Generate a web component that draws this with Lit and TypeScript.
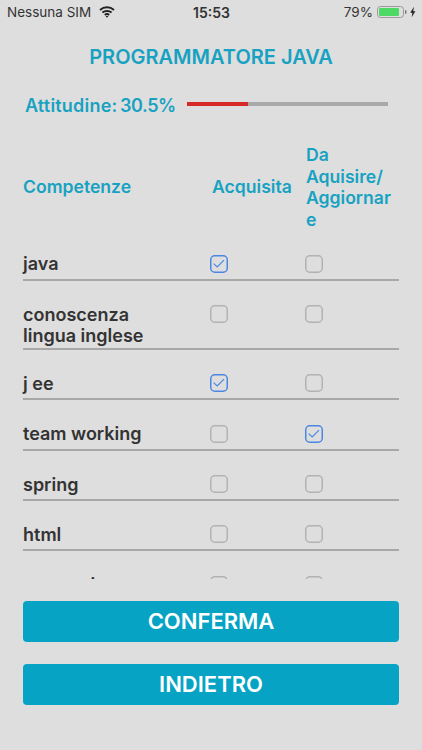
import { LitElement, html, css, svg } from "lit";
import { customElement } from "lit/decorators.js";

type Row = { name: string[]; a: boolean; b: boolean };
const rows: Row[] = [
  { name: ["java"], a: true, b: false },
  { name: ["conoscenza", "lingua inglese"], a: false, b: false },
  { name: ["j ee"], a: true, b: false },
  { name: ["team working"], a: false, b: true },
  { name: ["spring"], a: false, b: false },
  { name: ["html"], a: false, b: false },
  { name: ["responsive"], a: false, b: false },
];

@customElement("app-root")
export class AppRoot extends LitElement {
  static styles = css`
    :host {
      display: block;
      width: 422px;
      height: 750px;
      overflow: hidden;
      background: #dedede;
      font-family: Inter, "Liberation Sans", sans-serif;
    }
    .page { display: flex; flex-direction: column; height: 750px; }
    .status {
      height: 24px;
      flex: none;
      display: grid;
      grid-template-columns: 1fr auto 1fr;
      align-items: center;
      padding: 0 6px 0 7px;
      font-size: 13.5px;
      color: #333;
    }
    .status .left { display: flex; align-items: center; gap: 8px; }
    .status .time { font-weight: 600; font-size: 14px; }
    .status .right { display: flex; align-items: center; justify-content: flex-end; gap: 4px; }
    .title {
      flex: none;
      margin: 21px 0 0;
      height: 24px;
      line-height: 24px;
      text-align: center;
      font-size: 20px;
      font-weight: 600;
      color: #17a2c2;
    }
    .att {
      flex: none;
      margin-top: 25px;
      padding-left: 25px;
      display: flex;
      align-items: flex-start;
      height: 24px;
      color: #17a2c2;
      font-size: 18px;
      font-weight: 600;
      line-height: 24px;
      white-space: nowrap;
      word-spacing: -2px;
    }
    .att .lab { width: 162px; }
    .att .k { letter-spacing: 0.2px; }
    .att .v { letter-spacing: -0.4px; }
    .bar { width: 201px; height: 4px; margin-top: 8px; background: #a9a9a9; display: flex; }
    .bar i { display: block; height: 100%; background: #d62a26; }
    .scroll {
      flex: none;
      height: 462px;
      margin-top: -1px;
      padding: 0 23px;
      overflow: hidden;
    }
    .head, .row {
      display: grid;
      grid-template-columns: 187px 95px 1fr;
      width: 376px;
    }
    .head {
      align-items: center;
      padding-top: 27px;
      padding-bottom: 24.6px;
      color: #17a2c2;
      font-size: 17.6px;
      font-weight: 600;
      line-height: 21.6px;
    }
    .head > div:nth-child(2) { padding-left: 2px; }
    .head > div:nth-child(3) { padding-left: 1px; }
    .row {
      border-bottom: 2px solid #a8a8a8;
      padding-bottom: 2px;
      margin-bottom: 24.4px;
      min-height: 22px;
      color: #333;
      font-size: 18px;
      font-weight: 600;
      line-height: 21px;
      align-items: start;
    }
    .row:last-child .name { letter-spacing: -0.4px; }
    .name { margin-top: -1.5px; }
    .foot {
      flex: none;
      padding: 22px 23px 0;
      display: flex;
      flex-direction: column;
      gap: 22px;
    }
    .btn {
      height: 41px;
      border-radius: 4px;
      background: #06a3c4;
      color: #fff;
      font-size: 22px;
      font-weight: 600;
      line-height: 41px;
      text-align: center;
    }
    svg { display: block; }
  `;

  private box(on: boolean) {
    const c = on ? "#4a87e2" : "#b2b2b2";
    return html`<svg width="18" height="18" viewBox="0 0 18 18" fill="none">
      <rect x="0.75" y="0.75" width="16.5" height="16.5" rx="4" stroke=${c} stroke-width="1.5"></rect>
      ${on ? svg`<path d="M3.6 8.6 L7.2 12 L14 5.2" stroke=${c} stroke-width="1.2"></path>` : null}
    </svg>`;
  }

  render() {
    return html`<div class="page">
      <div class="status">
        <div class="left">
          <span>Nessuna SIM</span>
          <svg width="16" height="12" viewBox="0 0 16 12" fill="none" stroke="#222" stroke-width="1.9">
            <path d="M1 4 C5 0.4 11 0.4 15 4"></path>
            <path d="M3.4 6.6 C6 4.4 10 4.4 12.6 6.6"></path>
            <path d="M5.8 9 C7 8 9 8 10.2 9"></path>
            <path d="M8 11.8 L6.6 10.3 C7.4 9.8 8.6 9.8 9.4 10.3 Z" fill="#222" stroke="none"></path>
          </svg>
        </div>
        <div class="time">15:53</div>
        <div class="right">
          <span>79%</span>
          <svg width="39" height="12" viewBox="0 0 39 12">
            <rect x="0.5" y="0.5" width="26" height="11" rx="3" fill="none" stroke="#9a9a9a"></rect>
            <rect x="2" y="2" width="20" height="8" rx="1.2" fill="#4cd964"></rect>
            <rect x="28" y="4" width="1.4" height="4" rx="0.7" fill="#777"></rect>
            <path d="M37 0.8 L33.2 6.8 H35.4 L34.6 11.2 L38.4 5.2 H36.2 Z" fill="#222"></path>
          </svg>
        </div>
      </div>
      <h1 class="title">PROGRAMMATORE JAVA</h1>
      <div class="att">
        <div class="lab"><span class="k">Attitudine:</span> <span class="v">30.5%</span></div>
        <div class="bar"><i style="width:${(30.5).toFixed(1)}%"></i></div>
      </div>
      <div class="scroll">
        <div class="head">
          <div>Competenze</div>
          <div>Acquisita</div>
          <div>Da<br />Aquisire/<br />Aggiornar<br />e</div>
        </div>
        ${rows.map(
          (r) => html`<div class="row">
            <div class="name">${r.name.map((n, i) => html`${i ? html`<br />` : null}${n}`)}</div>
            <div>${this.box(r.a)}</div>
            <div>${this.box(r.b)}</div>
          </div>`
        )}
      </div>
      <div class="foot">
        <div class="btn">CONFERMA</div>
        <div class="btn">INDIETRO</div>
      </div>
    </div>`;
  }
}
